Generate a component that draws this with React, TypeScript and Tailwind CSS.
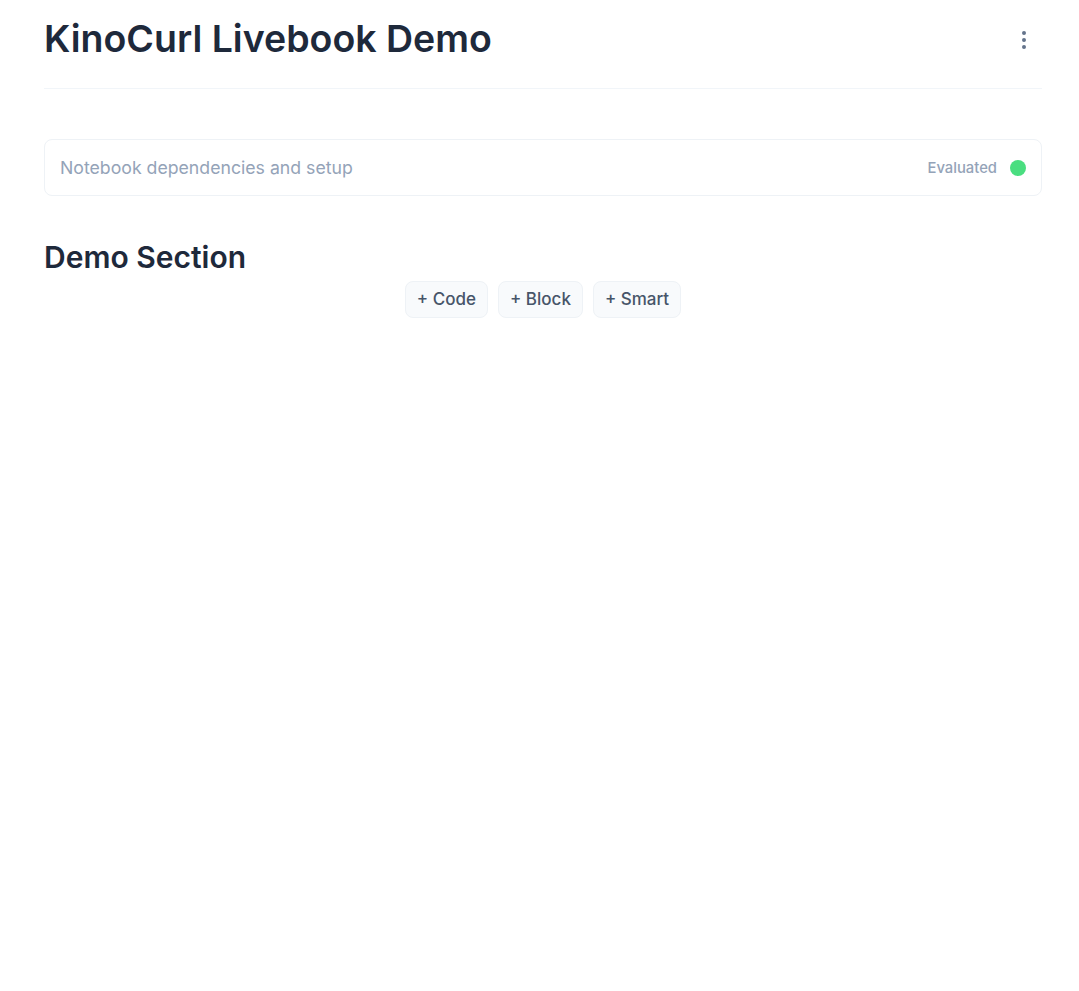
import { EllipsisVertical } from "lucide-react";

const FONT = "font-['Inter','Noto_Sans',sans-serif]";

const ADD_BUTTONS = ["+ Code", "+ Block", "+ Smart"];

export default function App() {
  return (
    <div className={`${FONT} min-h-[991px] bg-white text-[#1e293b]`}>
      <div className="ml-[44px] w-[998px]">
        <header className="flex h-[89px] items-start justify-between border-b border-[#f1f5f9] pt-[17px]">
          <h1 className="text-[37.5px] leading-[44px] font-semibold text-[#1e293b]">
            KinoCurl Livebook Demo
          </h1>
          <button className="mt-[11px] mr-[6px] text-[#64748b]">
            <EllipsisVertical size={24} strokeWidth={2} />
          </button>
        </header>

        <section className="mt-[50px] flex h-[57px] items-center justify-between rounded-lg border border-[#eef2f6] pt-px pr-[15px] pl-[15px]">
          <span className="text-[17.7px] text-[#94a3b8]">Notebook dependencies and setup</span>
          <div className="flex items-center gap-[13px]">
            <span className="text-[14.8px] font-medium text-[#94a3b8]">Evaluated</span>
            <span className="h-4 w-4 rounded-full bg-[#4ade80]" />
          </div>
        </section>

        <h2 className="mt-[42px] text-[30px] leading-[38px] font-semibold text-[#1e293b]">Demo Section</h2>

        <div className="mt-[5px] flex justify-center gap-[10px]">
          {ADD_BUTTONS.map((label) => (
            <button
              key={label}
              className="h-[37px] rounded-lg border border-[#eef2f6] bg-[#f8fafc] px-[11px] text-[17px] font-medium text-[#475569]"
            >
              {label}
            </button>
          ))}
        </div>
      </div>
    </div>
  );
}
